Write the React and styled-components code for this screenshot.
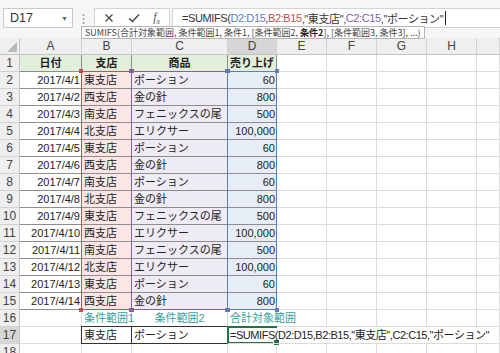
import React from 'react'
import styled, { createGlobalStyle } from 'styled-components'

const GlobalStyle = createGlobalStyle`
  html, body {
    margin: 0;
    padding: 0;
    background: #fff;
  }
  body {
    font-family: "Liberation Sans", "Noto Sans CJK JP", sans-serif;
  }
`;

const Window = styled.div`
  width: 500px;
  height: 353px;
  overflow: hidden;
  display: flex;
  flex-direction: column;
  background: #fff;
`;

const FormulaBar = styled.div`
  position: relative;
  flex: none;
  height: 38px;
  box-sizing: border-box;
  padding-top: 8px;
  display: flex;
  align-items: flex-start;
  background: #f6f6f6;
`;

const NameBox = styled.div`
  margin-left: 3px;
  width: 70px;
  height: 20px;
  box-sizing: border-box;
  display: flex;
  align-items: center;
  justify-content: space-between;
  padding: 0 4px 0 6px;
  background: #fff;
  border: 1px solid #c9c9c9;
  font-size: 12.5px;
  color: #333;
`;

const Caret = styled.span`
  font-size: 7px;
  color: #666;
`;

const Grip = styled.svg`
  margin: 5px 9px 0 9px;
  flex: none;
`;

const FuncBox = styled.div`
  width: 76px;
  height: 20px;
  box-sizing: border-box;
  display: flex;
  align-items: center;
  justify-content: space-around;
  padding: 0 2px;
  background: #fff;
  border: 1px solid #d4d4d4;
  color: #444;
`;

const FxLabel = styled.span`
  font-family: "Liberation Serif", serif;
  font-style: italic;
  font-size: 12px;
  color: #555;
  sub {
    font-size: 8px;
  }
`;

const FormulaInput = styled.div`
  margin-left: 2px;
  flex: 1;
  height: 20px;
  box-sizing: border-box;
  display: flex;
  align-items: center;
  padding-left: 9px;
  background: #fff;
  border: 1px solid #d4d4d4;
  border-right: none;
  font-size: 11px;
  letter-spacing: -0.4px;
  color: #333;
  white-space: nowrap;
`;

const Ref = styled.span`
  color: ${p => p.$color};
`;

const Cursor = styled.span`
  display: inline-block;
  width: 1px;
  height: 14px;
  margin-left: 2px;
  background: #222;
`;

const Tooltip = styled.div`
  position: absolute;
  left: 81px;
  top: 26px;
  height: 13px;
  box-sizing: border-box;
  padding: 0 3px;
  background: #fff;
  border: 1px solid #b5b5b5;
  font-family: "Noto Sans CJK JP", sans-serif;
  font-size: 9px;
  line-height: 11px;
  color: #444;
  white-space: nowrap;
  z-index: 5;
  b {
    font-weight: 700;
    color: #222;
  }
`;

const Sheet = styled.div`
  display: grid;
  grid-template-columns: 20px 62px 50px 96px 49px 50px 50px 50px 50px 23px;
  grid-template-rows: repeat(19, 17px);
  font-size: 11px;
  color: #222;
`;

const Corner = styled.div`
  grid-column: 1;
  grid-row: 1;
  background: #efefef;
  border-right: 1px solid #c4c4c4;
  border-bottom: 1px solid #c4c4c4;
  display: flex;
  align-items: flex-end;
  justify-content: flex-end;
  padding: 0 2px 2px 0;
`;

const ColHead = styled.div`
  grid-column: ${p => p.$col};
  grid-row: 1;
  background: ${p => (p.$active ? '#d6d6d6' : '#efefef')};
  border-right: 1px solid #d2d2d2;
  border-bottom: 1px solid #c4c4c4;
  text-align: center;
  font-size: 12px;
  line-height: 17px;
  color: #444;
`;

const RowHead = styled.div`
  grid-column: 1;
  grid-row: ${p => p.$row};
  background: ${p => (p.$active ? '#d6d6d6' : '#efefef')};
  border-right: 1px solid #c4c4c4;
  border-bottom: 1px solid #d2d2d2;
  text-align: center;
  font-size: 12px;
  line-height: 17px;
  color: #444;
`;

const Cell = styled.div`
  grid-column: ${p => p.$col};
  grid-row: ${p => p.$row};
  box-sizing: border-box;
  border-right: 1px solid ${p => p.$line || '#dcdcdc'};
  border-bottom: 1px solid ${p => p.$line || '#dcdcdc'};
  background: ${p => p.$bg || 'transparent'};
  text-align: ${p => p.$align || 'left'};
  font-weight: ${p => (p.$bold ? 700 : 400)};
  color: ${p => p.$color || '#222'};
  line-height: 17px;
  padding: 0 ${p => (p.$align === 'right' ? '1px' : '2px')};
  white-space: nowrap;
`;

const BoxCell = styled(Cell)`
  margin: -1px 0 0 -1px;
  border: 1px solid #333;
`;

const FormulaCell = styled(Cell)`
  font-size: 11px;
  letter-spacing: -0.45px;
  position: relative;
  z-index: 4;
`;

const Range = styled.div`
  grid-column: ${p => p.$col};
  grid-row: 3 / 17;
  margin: -1px 0 0 -1px;
  border: 1px solid ${p => p.$color};
  position: relative;
  z-index: 2;
  pointer-events: none;
`;

const Handle = styled.span`
  position: absolute;
  width: 4px;
  height: 4px;
  background: ${p => p.$color};
  ${p => (p.$top ? 'top: -3px;' : 'bottom: -3px;')}
  ${p => (p.$left ? 'left: -3px;' : 'right: -3px;')}
`;

const Selection = styled.div`
  grid-column: 5;
  grid-row: 18;
  margin: -1px 0 0 -1px;
  border: 2px solid #217346;
  border-right: none;
  position: relative;
  z-index: 3;
  &::after {
    content: '';
    position: absolute;
    right: -3px;
    bottom: -4px;
    width: 5px;
    height: 5px;
    background: #217346;
    border: 1px solid #fff;
  }
`;

const data = [
  ['2017/4/1', '東支店', 'ポーション', '60'],
  ['2017/4/2', '西支店', '金の針', '800'],
  ['2017/4/3', '南支店', 'フェニックスの尾', '500'],
  ['2017/4/4', '北支店', 'エリクサー', '100,000'],
  ['2017/4/5', '東支店', 'ポーション', '60'],
  ['2017/4/6', '西支店', '金の針', '800'],
  ['2017/4/7', '南支店', 'ポーション', '60'],
  ['2017/4/8', '北支店', '金の針', '800'],
  ['2017/4/9', '東支店', 'フェニックスの尾', '500'],
  ['2017/4/10', '西支店', 'エリクサー', '100,000'],
  ['2017/4/11', '南支店', 'フェニックスの尾', '500'],
  ['2017/4/12', '北支店', 'エリクサー', '100,000'],
  ['2017/4/13', '東支店', 'ポーション', '60'],
  ['2017/4/14', '西支店', '金の針', '800'],
]

const letters = ['A', 'B', 'C', 'D', 'E', 'F', 'G', 'H', '']
const TABLE_LINE = '#8e8e8e'
const RED = '#c0504d'
const PURPLE = '#8064a2'
const BLUE = '#5b7fb5'
const TEAL = '#3a9f9b'
const fills = ['#fff', '#fbe6e5', '#efebf5', '#e7edf6']

const Corners = ({ color }) => (
  <>
    <Handle $color={color} $top $left />
    <Handle $color={color} $top />
    <Handle $color={color} $left />
    <Handle $color={color} />
  </>
)

const EmptyCells = ({ row, from }) =>
  [5, 6, 7, 8, 9, 10].filter(c => c >= from).map(c => <Cell key={c} $col={c} $row={row} />)

const App = () => {
  const headers = ['日付', '支店', '商品', '売り上げ']
  return (
    <Window>
      <GlobalStyle />
      <FormulaBar>
        <NameBox>
          <span>D17</span>
          <Caret>▼</Caret>
        </NameBox>
        <Grip width="3" height="12" viewBox="0 0 3 12">
          <circle cx="1.5" cy="2" r="1" fill="#9a9a9a" />
          <circle cx="1.5" cy="6" r="1" fill="#9a9a9a" />
          <circle cx="1.5" cy="10" r="1" fill="#9a9a9a" />
        </Grip>
        <FuncBox>
          <svg width="10" height="10" viewBox="0 0 10 10">
            <path d="M1.5 1.5 L8.5 8.5 M8.5 1.5 L1.5 8.5" stroke="#444" strokeWidth="1.2" />
          </svg>
          <svg width="12" height="10" viewBox="0 0 12 10">
            <path d="M1 5.5 L4.5 8.5 L11 1.5" stroke="#444" strokeWidth="1.4" fill="none" />
          </svg>
          <FxLabel>f<sub>x</sub></FxLabel>
        </FuncBox>
        <FormulaInput>
          =SUMIFS(<Ref $color={BLUE}>D2:D15</Ref>,<Ref $color={RED}>B2:B15</Ref>,"東支店",
          <Ref $color={PURPLE}>C2:C15</Ref>,"ポーション"<Cursor />
        </FormulaInput>
        <Tooltip>
          SUMIFS(合計対象範囲, 条件範囲1, 条件1, [条件範囲2, <b>条件2</b>], [条件範囲3, 条件3], ...)
        </Tooltip>
      </FormulaBar>

      <Sheet>
        <Corner>
          <svg width="10" height="10" viewBox="0 0 10 10">
            <path d="M10 0 L10 10 L0 10 Z" fill="#b9b9b9" />
          </svg>
        </Corner>
        {letters.map((l, i) => (
          <ColHead key={i} $col={i + 2} $active={l === 'D'}>{l}</ColHead>
        ))}
        {Array.from({ length: 18 }, (_, i) => (
          <RowHead key={i} $row={i + 2} $active={i === 16}>{i + 1}</RowHead>
        ))}

        {headers.map((h, i) => (
          <Cell key={h} $col={i + 2} $row={2} $align="center" $bold $bg="#e2efda" $line={TABLE_LINE}>
            {h}
          </Cell>
        ))}
        <EmptyCells row={2} from={6} />

        {data.map((r, ri) => (
          <React.Fragment key={ri}>
            {r.map((v, ci) => (
              <Cell
                key={ci}
                $col={ci + 2}
                $row={ri + 3}
                $align={ci === 0 || ci === 3 ? 'right' : 'left'}
                $bg={fills[ci]}
                $line={TABLE_LINE}
              >
                {v}
              </Cell>
            ))}
            <EmptyCells row={ri + 3} from={6} />
          </React.Fragment>
        ))}

        <Cell $col={2} $row={17} />
        <Cell $col={3} $row={17} $color={TEAL}>条件範囲1</Cell>
        <Cell $col={4} $row={17} $color={TEAL} $align="center">条件範囲2</Cell>
        <Cell $col="5 / 7" $row={17} $color={TEAL}>合計対象範囲</Cell>
        <EmptyCells row={17} from={7} />

        <Cell $col={2} $row={18} />
        <BoxCell $col={3} $row={18}>東支店</BoxCell>
        <BoxCell $col={4} $row={18}>ポーション</BoxCell>
        <FormulaCell $col="5 / 11" $row={18}>
          =SUMIFS(D2:D15,B2:B15,"東支店",C2:C15,"ポーション"
        </FormulaCell>

        {[2, 3, 4].map(c => <Cell key={c} $col={c} $row={19} />)}
        <EmptyCells row={19} from={5} />

        <Range $col={3} $color={RED}><Corners color={RED} /></Range>
        <Range $col={4} $color={PURPLE}><Corners color={PURPLE} /></Range>
        <Range $col={5} $color={BLUE}><Corners color={BLUE} /></Range>
        <Selection />
      </Sheet>
    </Window>
  )
}

export default App
